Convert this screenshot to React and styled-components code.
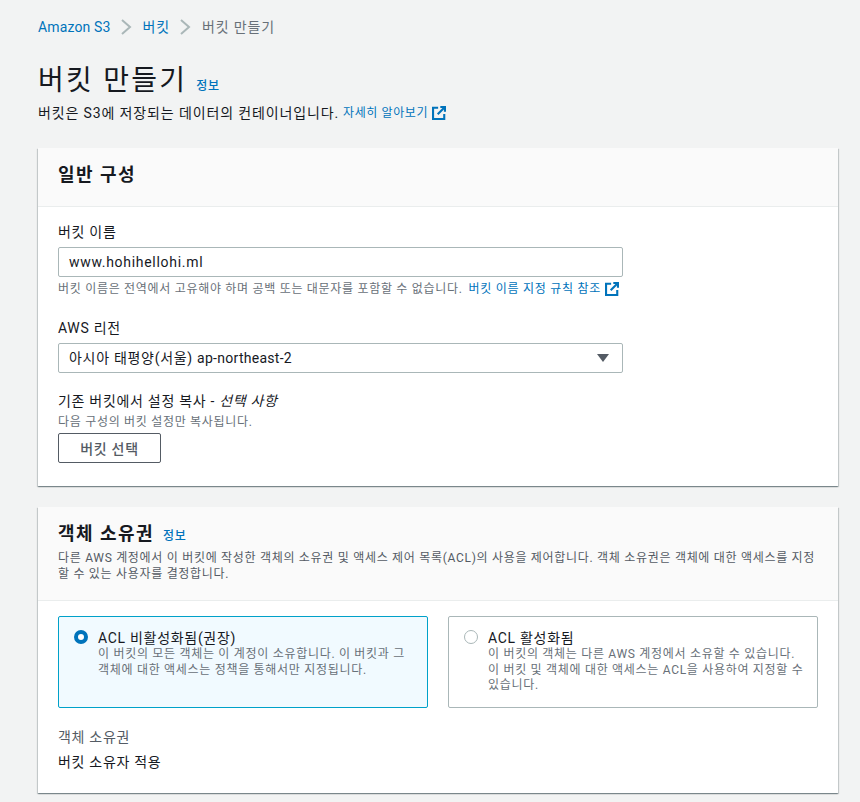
import styled, { createGlobalStyle } from 'styled-components';

const GlobalStyle = createGlobalStyle`
  html, body {
    margin: 0;
    padding: 0;
    background: #f2f3f3;
  }
  body {
    font-family: Roboto, "Noto Sans CJK KR", sans-serif;
    font-size: 14px;
    line-height: 20px;
    letter-spacing: 0.05em;
    color: #16191f;
  }
`;

const Page = styled.div`
  width: 860px;
  height: 802px;
  overflow: hidden;
  box-sizing: border-box;
  padding: 17px 22px 0 38px;
`;

const Breadcrumbs = styled.nav`
  display: flex;
  align-items: center;
  height: 20px;
  font-size: 14px;
`;

const Crumb = styled.a`
  color: ${(p) => (p.$current ? '#687078' : '#0073bb')};
  letter-spacing: ${(p) => (p.$latin ? '0.01em' : '0.06em')};
`;

const Chevron = styled.svg`
  width: 16px;
  height: 18px;
  margin: 0 8px 0 8px;
  fill: none;
  stroke: #aab7b8;
  stroke-width: 2;
`;

const TitleRow = styled.div`
  display: flex;
  align-items: baseline;
  margin-top: 26px;
`;

const Title = styled.h1`
  margin: 0;
  font-size: 28px;
  line-height: 36px;
  font-weight: 400;
  letter-spacing: 0.08em;
`;

const InfoLink = styled.a`
  margin-left: 9px;
  font-size: 12px;
  font-weight: 500;
  color: #0073bb;
`;

const Lead = styled.p`
  display: flex;
  align-items: center;
  margin: 4px 0 0;
  font-size: 14px;
  line-height: 20px;
  letter-spacing: 0.062em;
`;

const SmallLink = styled.a`
  display: inline-flex;
  align-items: center;
  gap: 4px;
  margin-left: ${(p) => p.$gap || 4}px;
  font-size: 12px;
  letter-spacing: ${(p) => p.$spacing || '0.05em'};
  color: #0073bb;
`;

const Card = styled.section`
  margin-top: ${(p) => p.$top}px;
  background: #fff;
  box-shadow: 0 1px 1px 0 rgba(0, 28, 36, 0.3), 1px 1px 1px 0 rgba(0, 28, 36, 0.15), -1px 1px 1px 0 rgba(0, 28, 36, 0.15);
`;

const CardHeader = styled.header`
  box-sizing: border-box;
  height: ${(p) => p.$height}px;
  padding: 14px 20px 0;
  background: #fafafa;
  border-bottom: 1px solid #eaeded;
`;

const CardTitleRow = styled.div`
  display: flex;
  align-items: baseline;
`;

const CardTitle = styled.h2`
  margin: 0;
  font-size: 18px;
  line-height: 26px;
  font-weight: 700;
  letter-spacing: 0.08em;
`;

const HeaderDesc = styled.p`
  margin: 3px 0 0;
  font-size: 12px;
  line-height: 16px;
  color: #545b64;
`;

const CardBody = styled.div`
  display: flex;
  flex-direction: column;
  padding: ${(p) => p.$padding};
`;

const Label = styled.label`
  font-size: 14px;
  line-height: 20px;
  color: #16191f;
  em {
    font-style: italic;
  }
`;

const Field = styled.div`
  display: flex;
  flex-direction: column;
  margin-bottom: ${(p) => p.$bottom || 0}px;
`;

const Input = styled.div`
  box-sizing: border-box;
  width: 565px;
  height: 30px;
  margin-top: 5px;
  padding: 0 10px;
  display: flex;
  align-items: center;
  justify-content: space-between;
  background: #fff;
  border: 1px solid #aab7b8;
  border-radius: 2px;
  font-size: 14px;
`;

const Latin = styled.span`
  letter-spacing: 0.02em;
`;

const Hint = styled.div`
  display: flex;
  align-items: center;
  margin-top: ${(p) => p.$top || 0}px;
  font-size: 12px;
  line-height: 16px;
  color: #687078;
`;

const Caret = styled.svg`
  width: 12px;
  height: 8px;
  margin-right: 3px;
  fill: #545b64;
`;

const Button = styled.button`
  box-sizing: border-box;
  width: 103px;
  height: 30px;
  margin-top: 3px;
  padding: 0;
  background: #fff;
  border: 1px solid #545b64;
  border-radius: 2px;
  font: 500 14px Roboto, "Noto Sans CJK KR", sans-serif;
  letter-spacing: 0.05em;
  color: #545b64;
`;

const Tiles = styled.div`
  display: grid;
  grid-template-columns: 370px 370px;
  gap: 20px;
`;

const Tile = styled.div`
  box-sizing: border-box;
  height: 92px;
  padding: 12px 12px 12px 15px;
  display: flex;
  gap: 10px;
  border: 1px solid ${(p) => (p.$selected ? '#00a1c9' : '#aab7b8')};
  border-radius: 2px;
  background: ${(p) => (p.$selected ? '#f1faff' : '#fff')};
`;

const Radio = styled.span`
  flex: none;
  box-sizing: border-box;
  width: 14px;
  height: 14px;
  margin-top: 1px;
  border-radius: 50%;
  background: #fff;
  border: ${(p) => (p.$checked ? '4px solid #0073bb' : '1px solid #aab7b8')};
`;

const TileTitle = styled.div`
  font-size: 14px;
  line-height: 18px;
  color: #16191f;
`;

const TileDesc = styled.div`
  font-size: 12px;
  line-height: 15.5px;
  color: #687078;
  word-break: keep-all;
`;

const ValueLabel = styled.div`
  margin-top: 19px;
  font-size: 14px;
  line-height: 20px;
  color: #545b64;
`;

const Value = styled.div`
  margin-top: 5px;
  font-size: 14px;
  line-height: 20px;
`;

const ExternalIcon = ({ size = 14 }) => (
  <svg width={size} height={size} viewBox="0 0 16 16" fill="none" stroke="#0073bb" strokeWidth="2.4">
    <path d="M7 2H1.2v12.8H14V9" />
    <path d="M9.5 1.2h5.3v5.3" />
    <path d="M14.5 1.5 6.5 9.5" />
  </svg>
);

const ChevronIcon = () => (
  <Chevron viewBox="0 0 16 18">
    <path d="M3 2l8 7-8 7" />
  </Chevron>
);

const App = () => {
  return (
    <Page>
      <GlobalStyle />
      <Breadcrumbs>
        <Crumb $latin>Amazon S3</Crumb>
        <ChevronIcon />
        <Crumb>버킷</Crumb>
        <ChevronIcon />
        <Crumb $current>버킷 만들기</Crumb>
      </Breadcrumbs>

      <TitleRow>
        <Title>버킷 만들기</Title>
        <InfoLink>정보</InfoLink>
      </TitleRow>
      <Lead>
        버킷은 S3에 저장되는 데이터의 컨테이너입니다.
        <SmallLink>
          자세히 알아보기 <ExternalIcon />
        </SmallLink>
      </Lead>

      <Card $top={25}>
        <CardHeader $height={59}>
          <CardTitle>일반 구성</CardTitle>
        </CardHeader>
        <CardBody $padding="15px 20px 23px">
          <Field $bottom={21}>
            <Label>버킷 이름</Label>
            <Input>www.hohihellohi.ml</Input>
            <Hint $top={4}>
              버킷 이름은 전역에서 고유해야 하며 공백 또는 대문자를 포함할 수 없습니다.
              <SmallLink $gap={6} $spacing="0.06em">
                버킷 이름 지정 규칙 참조 <ExternalIcon />
              </SmallLink>
            </Hint>
          </Field>
          <Field $bottom={18}>
            <Label>AWS 리전</Label>
            <Input>
              <span>
                아시아 태평양(서울) <Latin>ap-northeast-2</Latin>
              </span>
              <Caret viewBox="0 0 12 8">
                <path d="M0 0h12L6 8z" />
              </Caret>
            </Input>
          </Field>
          <Field>
            <Label>
              기존 버킷에서 설정 복사 - <em>선택 사항</em>
            </Label>
            <Hint $top={3}>다음 구성의 버킷 설정만 복사됩니다.</Hint>
            <div>
              <Button>버킷 선택</Button>
            </div>
          </Field>
        </CardBody>
      </Card>

      <Card $top={21}>
        <CardHeader $height={94}>
          <CardTitleRow>
            <CardTitle>객체 소유권</CardTitle>
            <InfoLink>정보</InfoLink>
          </CardTitleRow>
          <HeaderDesc>
            다른 AWS 계정에서 이 버킷에 작성한 객체의 소유권 및 액세스 제어 목록(ACL)의 사용을 제어합니다. 객체 소유권은 객체에 대한 액세스를 지정할 수 있는 사용자를 결정합니다.
          </HeaderDesc>
        </CardHeader>
        <CardBody $padding="15px 20px 21px">
          <Tiles>
            <Tile $selected>
              <Radio $checked />
              <div>
                <TileTitle>ACL 비활성화됨(권장)</TileTitle>
                <TileDesc>이 버킷의 모든 객체는 이 계정이 소유합니다. 이 버킷과 그 객체에 대한 액세스는 정책을 통해서만 지정됩니다.</TileDesc>
              </div>
            </Tile>
            <Tile>
              <Radio />
              <div>
                <TileTitle>ACL 활성화됨</TileTitle>
                <TileDesc>이 버킷의 객체는 다른 AWS 계정에서 소유할 수 있습니다. 이 버킷 및 객체에 대한 액세스는 ACL을 사용하여 지정할 수 있습니다.</TileDesc>
              </div>
            </Tile>
          </Tiles>
          <ValueLabel>객체 소유권</ValueLabel>
          <Value>버킷 소유자 적용</Value>
        </CardBody>
      </Card>
    </Page>
  );
};

export default App;
